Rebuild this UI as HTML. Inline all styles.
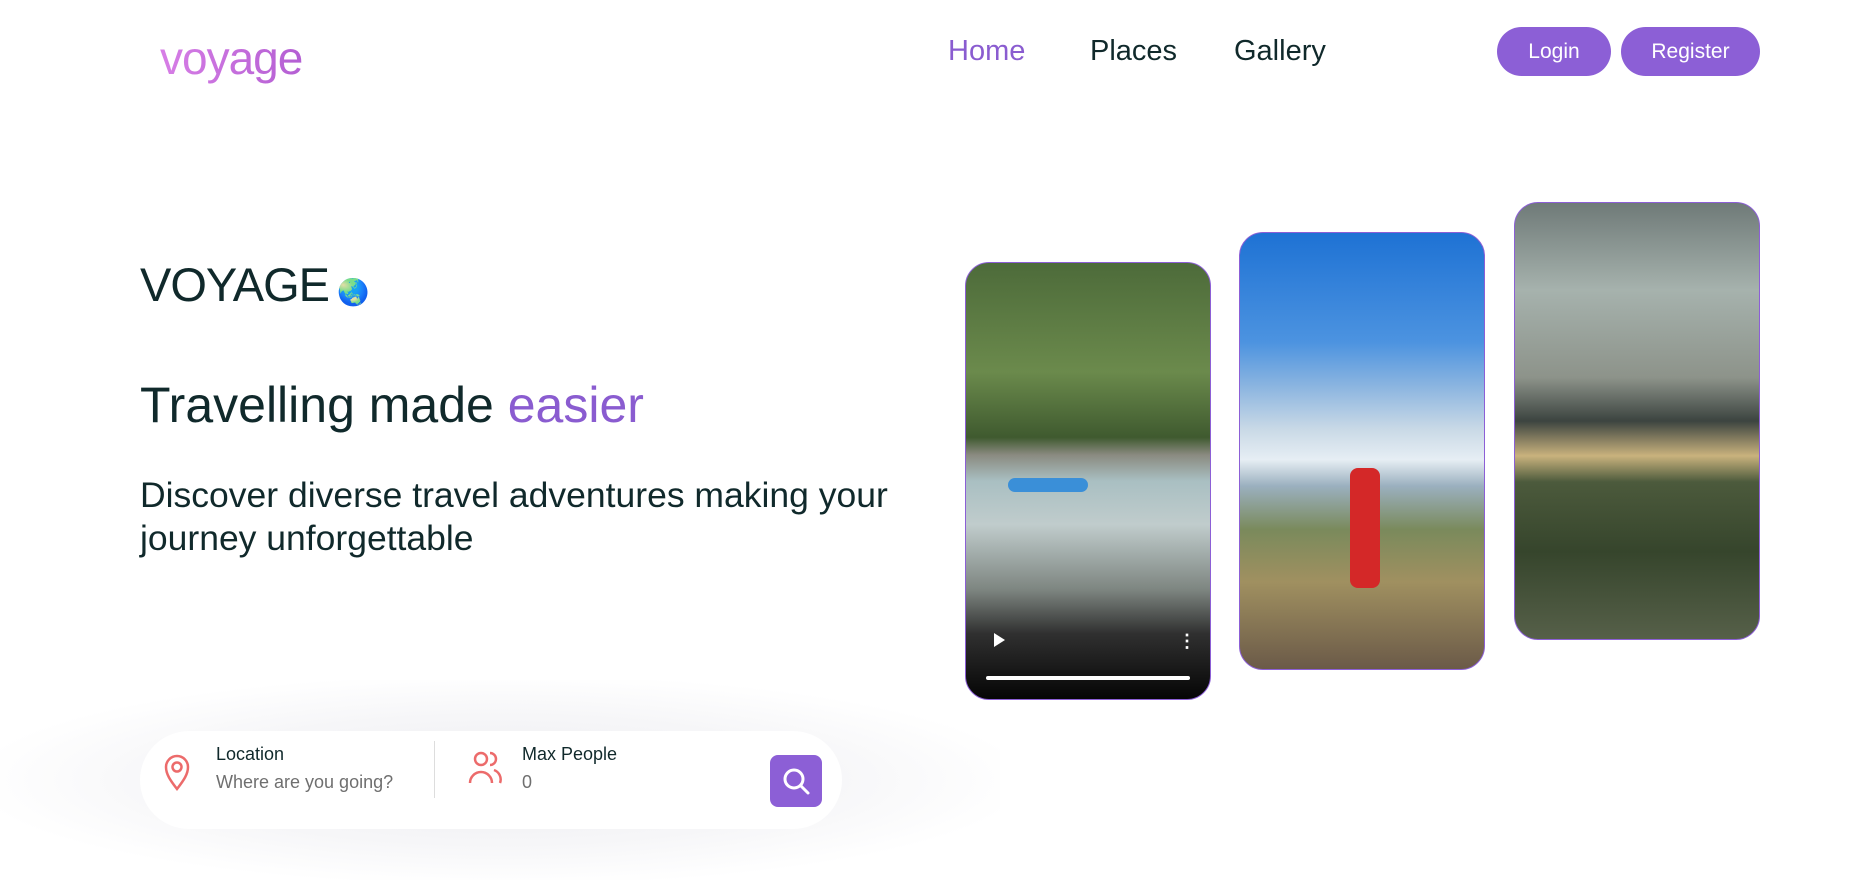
<!DOCTYPE html>
<html><head><meta charset="utf-8"><style>
*{margin:0;padding:0;box-sizing:border-box}
body{width:1874px;height:848px;overflow:hidden;background:#fff;font-family:"Liberation Sans",sans-serif;color:#10292b;position:relative}
.abs{position:absolute}
.logo{left:160px;top:31px;font-size:46px;letter-spacing:-1px;background:linear-gradient(90deg,#d77ee6,#b45fd3);-webkit-background-clip:text;color:transparent}
.nav{top:35px;font-size:29px;color:#10292b}
.btn{top:27px;height:49px;border-radius:25px;background:#8c5fd6;color:#fff;font-size:21px;display:flex;align-items:center;justify-content:center}
.card{border:1px solid #8c5fd6;border-radius:24px;overflow:hidden;width:246px;height:438px}
</style></head><body>
<div class="abs logo">voyage</div>
<div class="abs nav" style="left:948px;color:#8a5cd0">Home</div>
<div class="abs nav" style="left:1090px">Places</div>
<div class="abs nav" style="left:1234px">Gallery</div>
<div class="abs btn" style="left:1497px;width:114px">Login</div>
<div class="abs btn" style="left:1621px;width:139px">Register</div>

<div class="abs" style="left:140px;top:257px;font-size:47px;letter-spacing:-1px">VOYAGE<span style="font-size:26px;margin-left:8px;letter-spacing:0">🌏</span></div>
<div class="abs" style="left:140px;top:376px;font-size:50px">Travelling made <span style="color:#8a5cd0">easier</span></div>
<div class="abs" style="left:140px;top:474px;font-size:35.5px;line-height:43px;width:820px">Discover diverse travel adventures making your<br>journey unforgettable</div>

<div class="abs card" style="left:965px;top:262px;background:linear-gradient(180deg,#4d6b3a 0%,#6b8a4c 25%,#3f5a2f 40%,#8a8a80 44%,#a9bfc2 50%,#c0cccc 60%,#7d8580 75%,#303030 85%,#050505 100%)">
<div class="abs" style="left:20px;top:413px;width:204px;height:4px;background:#fff;border-radius:2px"></div>
<div class="abs" style="left:28px;top:370px;width:0;height:0;border-left:11px solid #fff;border-top:7px solid transparent;border-bottom:7px solid transparent"></div>
<div class="abs" style="left:212px;top:368px;color:#fff;font-size:18px;font-weight:bold">⋮</div>
<div class="abs" style="left:42px;top:215px;width:80px;height:14px;border-radius:7px;background:#3a8fd8"></div>
</div>
<div class="abs card" style="left:1239px;top:232px;background:linear-gradient(180deg,#1e72d4 0%,#4c93e0 25%,#8ab4e0 35%,#c9d9e6 45%,#e6eef4 52%,#9bb0bf 58%,#7a8a5c 68%,#a09060 80%,#6b5a48 100%)">
<div class="abs" style="left:110px;top:235px;width:30px;height:120px;background:#d42828;border-radius:8px"></div>
</div>
<div class="abs card" style="left:1514px;top:202px;background:linear-gradient(180deg,#6f7a78 0%,#a6b2ad 20%,#8d938a 40%,#3c4440 50%,#c9b27d 58%,#4c5a3c 64%,#36452c 80%,#566049 100%)"></div>

<div class="abs" style="left:0px;top:680px;width:1000px;height:200px;background:radial-gradient(ellipse at center,#ededf0 0%,#f6f6f8 45%,rgba(255,255,255,0) 75%)"></div>
<div class="abs" style="left:140px;top:731px;width:702px;height:98px;background:#fff;border-radius:49px"></div>
<svg class="abs" style="left:162px;top:752px" width="30" height="40" viewBox="0 0 30 40"><path d="M15 37C8 28 4 22 4 15a11 11 0 0 1 22 0c0 7-4 13-11 22z" fill="none" stroke="#ec6b6b" stroke-width="2.5"/><circle cx="15" cy="15" r="4.5" fill="none" stroke="#ec6b6b" stroke-width="2.5"/></svg>
<div class="abs" style="left:216px;top:744px;font-size:18px">Location</div>
<div class="abs" style="left:216px;top:772px;font-size:18px;color:#6f6f6f">Where are you going?</div>
<div class="abs" style="left:434px;top:741px;width:1px;height:57px;background:#ddd"></div>
<svg class="abs" style="left:466px;top:748px" width="38" height="38" viewBox="0 0 38 38"><circle cx="15" cy="11" r="6" fill="none" stroke="#ec6b6b" stroke-width="2.5"/><path d="M4 35a11 11 0 0 1 22 0" fill="none" stroke="#ec6b6b" stroke-width="2.5"/><path d="M24 5a6 6 0 0 1 0 12M28 22a10 10 0 0 1 6 13" fill="none" stroke="#ec6b6b" stroke-width="2.5"/></svg>
<div class="abs" style="left:522px;top:744px;font-size:18px">Max People</div>
<div class="abs" style="left:522px;top:772px;font-size:18px;color:#6f6f6f">0</div>
<div class="abs" style="left:770px;top:755px;width:52px;height:52px;border-radius:8px;background:#8c5fd6"></div>
<svg class="abs" style="left:781px;top:766px" width="30" height="30" viewBox="0 0 30 30"><circle cx="13" cy="13" r="9" fill="none" stroke="#fff" stroke-width="3"/><path d="M20 20l7 7" stroke="#fff" stroke-width="3" stroke-linecap="round"/></svg>
</body></html>
